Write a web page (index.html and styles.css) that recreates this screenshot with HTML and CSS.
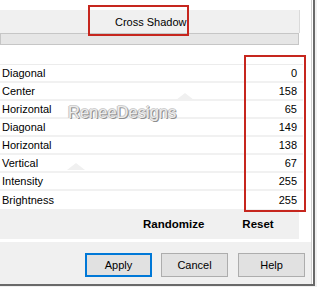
FILE: index.html
```html
<!DOCTYPE html>
<html>
<head>
<meta charset="utf-8">
<link rel="stylesheet" href="styles.css">
</head>
<body>
<div class="window">
  <div class="inner">
    <div class="top"></div>
    <div class="header"><span class="title">Cross Shadow</span></div>
    <div class="bar"></div>
    <div class="gap"></div>
    <div class="rows">
      <div class="row"><span>Diagonal</span><span>0</span></div>
      <div class="row"><span>Center</span><span>158</span></div>
      <div class="row"><span>Horizontal</span><span>65</span></div>
      <div class="row"><span>Diagonal</span><span>149</span></div>
      <div class="row"><span>Horizontal</span><span>138</span></div>
      <div class="row"><span>Vertical</span><span>67</span></div>
      <div class="row"><span>Intensity</span><span>255</span></div>
      <div class="row"><span>Brightness</span><span>255</span></div>
    </div>
    <div class="actions"><span class="randomize">Randomize</span><span class="reset">Reset</span></div>
    <div class="spacer"></div>
    <div class="footer">
      <button class="btn primary">Apply</button>
      <button class="btn">Cancel</button>
      <button class="btn">Help</button>
    </div>
  </div>
  <div class="watermark">ReneeDesigns</div>
  <div class="mark mark1"></div>
  <div class="mark mark2"></div>
</div>
</body>
</html>
```
FILE: styles.css
```css
html, body {
  margin: 0;
  padding: 0;
}
body {
  width: 317px;
  height: 287px;
  background: #f0f0f0;
  font-family: "Liberation Sans", Arial, sans-serif;
  font-size: 11px;
  color: #000;
  overflow: hidden;
}
.window {
  position: relative;
  width: 313px;
  height: 284px;
  background: #fff;
  border-right: 2px solid #696969;
  border-bottom: 2px solid #696969;
}
.inner {
  width: 311px;
  height: 284px;
  border-right: 1px solid #cfcfcf;
  display: flex;
  flex-direction: column;
}
.top {
  height: 10px;
}
.header {
  height: 23px;
  width: 300px;
  background: #f0f0f0;
  border-right: 1px solid #dadada;
  display: flex;
  align-items: center;
  padding-left: 115px;
  box-sizing: border-box;
}
.title {
  font-size: 11px;
  padding-top: 1px;
}
.bar {
  width: 299px;
  height: 12px;
  box-sizing: border-box;
  border: 1px solid #c6c6c6;
  background: #e6e6e6;
}
.gap {
  height: 19px;
}
.rows {
  width: 303px;
  border-top: 1px solid #ececec;
}
.row {
  height: 16px;
  border-bottom: 2px solid #f1f1f1;
  display: flex;
  justify-content: space-between;
  align-items: center;
  padding: 0 6px 0 2px;
}
.row:last-child {
  border-bottom: none;
  height: 18px;
}
.actions {
  width: 299px;
  height: 30px;
  background: #f0f0f0;
  display: flex;
  align-items: center;
  font-weight: bold;
  font-size: 11.5px;
}
.randomize {
  margin-left: 143px;
}
.reset {
  margin-left: 38px;
}
.spacer {
  height: 3px;
}
.footer {
  flex: 1;
  background: #f0f0f0;
  display: flex;
  justify-content: flex-end;
  align-items: flex-start;
  padding: 11px 6px 0 0;
  gap: 9px;
}
.btn {
  width: 67px;
  height: 24px;
  margin: 0;
  background: #e1e1e1;
  border: 1px solid #adadad;
  font-family: "Liberation Sans", Arial, sans-serif;
  font-size: 11px;
  color: #000;
  padding: 0;
}
.btn:last-child {
  margin-left: 1px;
}
.btn.primary {
  border: 2px solid #0078d7;
}
.watermark {
  position: absolute;
  left: 68px;
  top: 103px;
  font-size: 16.5px;
  color: #ececec;
  text-shadow: 1px 1px 0 #8e8e8e, -1px 0 0 #c4c4c4, 0 -1px 0 #d0d0d0, 1px 0 0 #b0b0b0;
}
.mark {
  position: absolute;
  width: 0;
  height: 0;
  border-left: 9px solid transparent;
  border-right: 9px solid transparent;
  border-bottom: 7px solid #f0f0f0;
}
.mark1 { left: 176px; top: 93px; }
.mark2 { left: 67px; top: 163px; }
.window::before,
.window::after {
  content: "";
  position: absolute;
  border: 2px solid #c6261e;
  box-sizing: border-box;
}
.window::before {
  left: 88px;
  top: 5px;
  width: 101px;
  height: 31px;
}
.window::after {
  left: 244px;
  top: 55px;
  width: 62px;
  height: 157px;
}
```
